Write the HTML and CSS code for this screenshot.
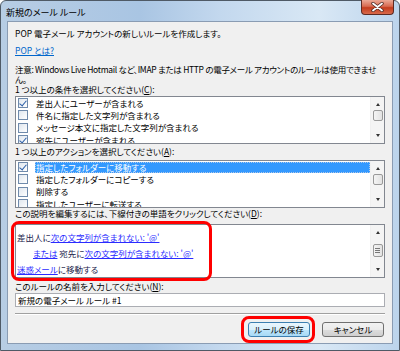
FILE: index.html
```html
<!DOCTYPE html>
<html lang="ja">
<head>
<meta charset="UTF-8">
<title>新規のメール ルール</title>
<link rel="stylesheet" href="styles.css">
</head>
<body>

<div class="window">
    <div class="titlebar">
        <span class="title">新規のメール ルール</span>
        <div class="close-btn">
            <svg width="13" height="10" viewBox="0 0 13 10">
                <path d="M2 1.5 L11 8.5 M11 1.5 L2 8.5" stroke="#4a2a25" stroke-width="3.4" stroke-linecap="round"/>
                <path d="M2 1.5 L11 8.5 M11 1.5 L2 8.5" stroke="#fff" stroke-width="1.8" stroke-linecap="round"/>
            </svg>
        </div>
    </div>

    <div class="client">
        <p class="intro">POP 電子メール アカウントの新しいルールを作成します。</p>
        <p class="help"><a href="#">POP とは?</a></p>
        <p class="note"><span class="nowrap">注意: Windows Live Hotmail など、IMAP または HTTP の電子メール アカウントのルールは使用できませ</span><br>ん。</p>

        <p class="label">1 つ以上の条件を選択してください(<u>C</u>):</p>
        <div class="listbox">
            <div class="rows">
                <div class="row"><span class="check on"></span><span class="text">差出人にユーザーが含まれる</span></div>
                <div class="row"><span class="check"></span><span class="text">件名に指定した文字列が含まれる</span></div>
                <div class="row"><span class="check"></span><span class="text">メッセージ本文に指定した文字列が含まれる</span></div>
                <div class="row"><span class="check on"></span><span class="text">宛先にユーザーが含まれる</span></div>
            </div>
            <div class="scrollbar">
                <span class="arrow up"></span>
                <span class="thumb top"></span>
                <span class="arrow down"></span>
            </div>
        </div>

        <p class="label after-list">1 つ以上のアクションを選択してください(<u>A</u>):</p>
        <div class="listbox">
            <div class="rows">
                <div class="row"><span class="check on"></span><span class="text selected">指定したフォルダーに移動する</span></div>
                <div class="row"><span class="check"></span><span class="text">指定したフォルダーにコピーする</span></div>
                <div class="row"><span class="check"></span><span class="text">削除する</span></div>
                <div class="row"><span class="check"></span><span class="text">指定したユーザーに転送する</span></div>
            </div>
            <div class="scrollbar">
                <span class="arrow up"></span>
                <span class="thumb top"></span>
                <span class="arrow down"></span>
            </div>
        </div>

        <p class="label">この説明を編集するには、下線付きの単語をクリックしてください(<u>D</u>):</p>
        <div class="desc-wrap">
            <div class="desc">
                <div class="desc-text">
                    <p>差出人に<a href="#">次の文字列が含まれない: '@'</a></p>
                    <p class="indent"><a href="#">または</a> 宛先に<a href="#">次の文字列が含まれない: '@'</a></p>
                    <p><a href="#">迷惑メール</a>に移動する</p>
                </div>
                <div class="scrollbar">
                    <span class="arrow up"></span>
                    <span class="thumb mid"><i></i><i></i><i></i></span>
                    <span class="arrow down"></span>
                </div>
            </div>
            <div class="mark mark-desc"></div>
        </div>

        <p class="label name-label">このルールの名前を入力してください(<u>N</u>):</p>
        <div class="name-input">新規の電子メール ルール #1</div>

        <div class="separator"></div>

        <div class="buttons">
            <div class="btn-wrap">
                <button class="btn default">ルールの保存</button>
                <div class="mark mark-btn"></div>
            </div>
            <button class="btn">キャンセル</button>
        </div>
    </div>
</div>

</body>
</html>
```

FILE: styles.css
```css
body {
    margin: 0;
    padding: 0;
    font-family: "Noto Sans CJK JP", "Liberation Sans", sans-serif;
    font-size: 8.5px;
    font-feature-settings: "palt";
    color: #000;
}

p {
    margin: 0;
}

.window {
    width: 400px;
    height: 351px;
    box-sizing: border-box;
    border: 1px solid #4f5a66;
    border-radius: 6px 6px 0 0;
    background: linear-gradient(to right, #b7cde4, #a9c5e3 35%, #c3d8ee 55%, #d9e8f5 80%, #bcd4ec);
    padding: 0 6px 6px 6px;
    display: flex;
    flex-direction: column;
}

.titlebar {
    height: 20px;
    display: flex;
    align-items: center;
    justify-content: space-between;
    position: relative;
}

.title {
    margin-left: -1px;
    margin-top: 3px;
    font-size: 9px;
    color: #000;
}

.close-btn {
    position: absolute;
    right: -1px;
    top: -1px;
    width: 33px;
    height: 15px;
    box-sizing: border-box;
    border: 1px solid #5e2a22;
    border-top: none;
    border-radius: 0 0 4px 4px;
    background: linear-gradient(#eba996, #d86a50 45%, #c43c1c 55%, #d86a4c);
    display: flex;
    align-items: center;
    justify-content: center;
}

.client {
    flex: 1;
    background-color: #f0f0f0;
    border: 1px solid #8a9cb3;
    padding: 5px 7px 0 7px;
    display: flex;
    flex-direction: column;
}

.intro {
    line-height: 12px;
    height: 12px;
}

.help {
    margin-top: 5px;
    line-height: 12px;
    height: 12px;
}

a {
    color: #0066cc;
}

.note {
    margin-top: 8px;
    line-height: 10px;
    letter-spacing: -0.3px;
}

.nowrap {
    white-space: nowrap;
}

.label {
    line-height: 11px;
    height: 12px;
}

.label.after-list {
    margin-top: 2px;
    height: 14px;
}

u {
    text-decoration: underline;
}

.listbox {
    height: 48px;
    box-sizing: border-box;
    border: 1px solid #828790;
    background-color: #fff;
    display: flex;
    overflow: hidden;
}

.rows {
    flex: 1;
}

.row {
    height: 12.3px;
    display: flex;
    align-items: center;
}

.check {
    width: 8px;
    height: 8px;
    margin-left: 2px;
    margin-right: 7px;
    border: 1px solid #6f8aab;
    background: linear-gradient(135deg, #dfe6ee, #fff);
    position: relative;
}

.check.on::after {
    content: "";
    position: absolute;
    left: 2px;
    top: 0;
    width: 3px;
    height: 6px;
    border: solid #2a5ea8;
    border-width: 0 1.5px 1.5px 0;
    transform: rotate(40deg);
}

.text {
    flex: 1;
    line-height: 11px;
    padding-left: 1px;
}

.text.selected {
    background-color: #3399ff;
    color: #fff;
    outline: 1px dotted #b0c8e8;
    outline-offset: -1px;
}

.scrollbar {
    width: 13px;
    background-color: #f4f4f4;
    border-left: 1px solid #f0f0f0;
    display: flex;
    flex-direction: column;
    align-items: center;
}

.arrow {
    width: 0;
    height: 0;
    border-left: 2.5px solid transparent;
    border-right: 2.5px solid transparent;
}

.arrow.up {
    margin-top: 6px;
    border-bottom: 3px solid #333;
}

.arrow.down {
    margin-top: auto;
    margin-bottom: 6px;
    border-top: 3px solid #333;
}

.thumb {
    width: 10px;
    box-sizing: border-box;
    border: 1px solid #999;
    border-radius: 2px;
    background: linear-gradient(to right, #f4f4f4, #e2e2e2);
}

.thumb.top {
    height: 11px;
    margin-top: 4px;
}

.thumb.mid {
    height: 13px;
    margin-top: 10px;
    display: flex;
    flex-direction: column;
    align-items: center;
    justify-content: center;
    gap: 1px;
}

.thumb.mid i {
    width: 5px;
    height: 1px;
    background-color: #777;
}

.desc-wrap {
    position: relative;
    margin-top: 4px;
}

.desc {
    height: 54px;
    box-sizing: border-box;
    border: 1px solid #828790;
    background-color: #fff;
    display: flex;
}

.desc-text {
    flex: 1;
    padding: 4px 0 0 1px;
    color: #1a1a4a;
}

.desc-text p {
    line-height: 16px;
}

.desc-text a {
    color: #2b2bff;
}

.desc-text .indent {
    padding-left: 16px;
}

.mark {
    position: absolute;
    border: 3px solid #ff0000;
    border-radius: 8px;
}

.mark-desc {
    left: -4px;
    top: -3px;
    width: 195px;
    height: 54px;
}

.name-label {
    margin-top: 3px;
}

.name-input {
    height: 14px;
    box-sizing: border-box;
    border: 1px solid #abadb3;
    background-color: #fff;
    line-height: 12px;
    padding-left: 2px;
}

.separator {
    margin-top: 6px;
    height: 1px;
    background-color: #a0a0a0;
    border-bottom: 1px solid #fff;
}

.buttons {
    margin-top: 7px;
    display: flex;
    justify-content: flex-end;
    gap: 12px;
    padding-right: 1px;
}

.btn-wrap {
    position: relative;
    display: flex;
}

.btn {
    width: 62px;
    height: 15px;
    padding: 0;
    font-family: inherit;
    font-size: 8.5px;
    font-feature-settings: "palt";
    line-height: 13px;
    border: 1px solid #707070;
    border-radius: 3px;
    background: linear-gradient(#f2f2f2, #ebebeb 50%, #dddddd 50%, #cfcfcf);
    color: #000;
}

.btn.default {
    border-color: #3c7fb1;
    background: linear-gradient(#eaf6fd, #d9f0fc 50%, #bee6fd 50%, #a7d9f5);
}

.mark-btn {
    left: -7px;
    top: -6px;
    width: 68px;
    height: 21px;
}
```
